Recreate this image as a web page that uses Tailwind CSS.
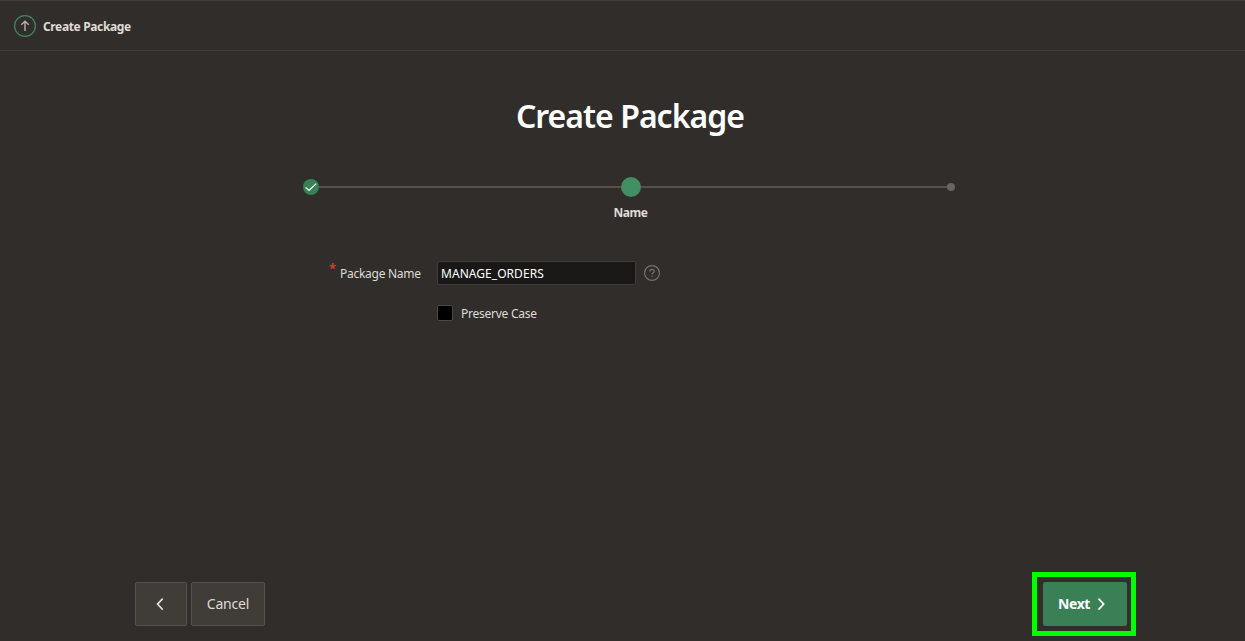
<!DOCTYPE html>
<html lang="en">
<head>
<meta charset="utf-8">
<title>Create Package</title>
<script src="https://cdn.jsdelivr.net/npm/@tailwindcss/browser@4"></script>
</head>
<body class="h-[641px] w-[1245px] overflow-hidden bg-[#312d2a] font-['Noto_Sans','Open_Sans',sans-serif] text-[#dfdbd7]">
<div class="flex h-full flex-col">
  <header class="flex h-[51px] shrink-0 items-center border-y border-[#403c38] pl-[14px]">
    <svg class="size-[22px]" viewBox="0 0 22 22" fill="none"><circle cx="11" cy="11" r="10.4" stroke="#3f8a60" stroke-width="1.2"/><path d="M11 16V6.5M7.3 9.8 11 6.2l3.7 3.6" stroke="#b5b0aa" stroke-width="1.4"/></svg>
    <span class="ml-[7px] pt-[2px] text-[12px] leading-4 font-bold tracking-[-0.36px]">Create Package</span>
  </header>
  <main class="flex flex-1 flex-col">
    <h1 class="mt-[43px] pl-[15px] text-center text-[32px] leading-[44px] font-semibold tracking-[-0.98px] text-white">Create Package</h1>
    <div class="mt-[39px] ml-[303px] flex h-5 w-[652px] items-center">
      <svg class="size-4" viewBox="0 0 16 16" fill="none"><circle cx="8" cy="8" r="8" fill="#398057"/><path d="m2.6 8.4 3.4 3L13.2 4.6" stroke="#fff" stroke-width="1.2"/></svg>
      <div class="h-[2px] flex-1 bg-[#57514b]"></div>
      <div class="size-5 rounded-full bg-[#418f63]"></div>
      <div class="h-[2px] w-[306px] bg-[#57514b]"></div>
      <div class="size-2 rounded-full bg-[#696460]"></div>
    </div>
    <div class="mt-[8px] pl-[16px] text-center text-[12px] leading-4 font-bold tracking-[-0.5px]">Name</div>
    <div class="mt-10 ml-[329px] flex h-6 items-center">
      <span class="w-[11px] self-start text-[13px] leading-[14px] font-bold text-[#d63b2f]">*</span>
      <label for="name" class="w-[97px] pt-[2px] text-[12px] tracking-[-0.27px] whitespace-nowrap">Package Name</label>
      <input id="name" value="MANAGE_ORDERS" class="h-6 w-[199px] rounded-[2px] border border-[#403c38] bg-[#191816] px-[3px] text-[12px] tracking-[0.05px] text-white">
      <svg class="ml-[8px] size-4" viewBox="0 0 16 16" fill="none" stroke="#76716c"><circle cx="8" cy="8" r="7.4" stroke-width="1.2"/><path d="M5.9 6.5c0-2.8 4.3-2.8 4.3-.2 0 1.5-2.1 1.5-2.1 3.2M8.1 10.7v1.3" stroke-width="1.2"/></svg>
    </div>
    <div class="mt-5 ml-[437px] flex h-4 items-center gap-2">
      <div class="size-4 rounded-[2px] border border-[#4d4945] bg-black"></div>
      <span class="pt-[2px] text-[12px] tracking-[-0.25px]">Preserve Case</span>
    </div>
  </main>
  <footer class="flex h-[69px] shrink-0 items-start pr-[109px] pl-[135px]">
    <button class="mt-[10px] flex h-[44px] w-[52px] items-center justify-center rounded-[2px] border border-[#55514c] bg-[#403c38]"><svg class="mr-[3px] size-4" viewBox="0 0 16 16" fill="none"><path d="m10.7 2.6-5.2 5.5 5.2 5.5" stroke="#e4e0dc" stroke-width="1.6"/></svg></button>
    <button class="mt-[10px] ml-1 h-[44px] w-[74px] rounded-[2px] border border-[#55514c] bg-[#403c38] pb-[2px] text-[14px] tracking-[-0.2px]">Cancel</button>
    <div class="ml-auto h-[64px] w-[104px] border-[5px] border-[#00ff00] px-[6px] py-[5px]">
      <button class="flex h-[44px] w-[84px] items-center rounded-[2px] bg-[#398057] pl-[15px] text-[14px] font-bold tracking-[-0.4px] text-white"><span class="pb-[2px]">Next</span><svg class="ml-[3px] size-4" viewBox="0 0 16 16" fill="none"><path d="m5.5 2.6 5.2 5.5-5.2 5.5" stroke="#fff" stroke-width="1.6"/></svg></button>
    </div>
  </footer>
</div>
</body>
</html>
